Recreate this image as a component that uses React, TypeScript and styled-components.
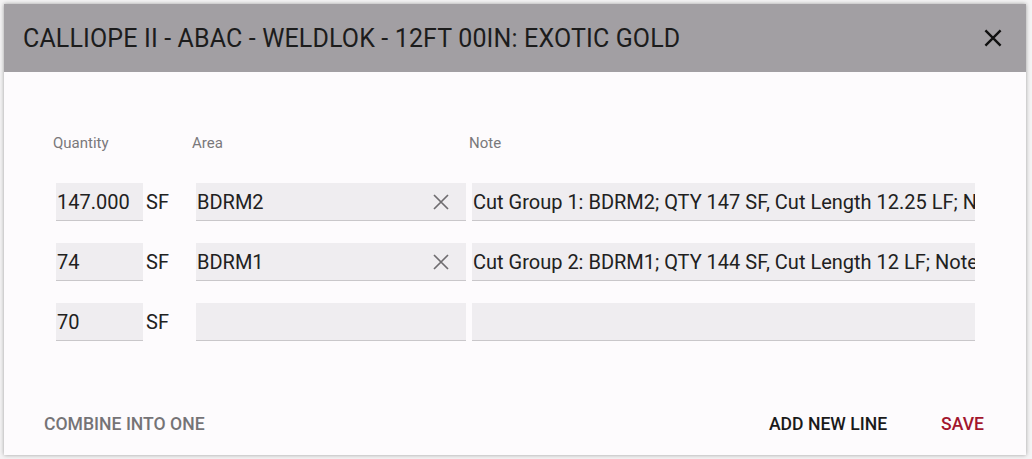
import React from "react";
import styled, { createGlobalStyle } from "styled-components";

const Global = createGlobalStyle`
  html, body { margin: 0; padding: 0; background: #f4f3f4; }
  body { font-family: Roboto, "Liberation Sans", Arial, sans-serif; }
  * { box-sizing: border-box; }
`;

const Page = styled.div`
  width: 1032px;
  height: 459px;
  padding: 4px 6px 4px 4px;
`;

const Dialog = styled.div`
  width: 1022px;
  height: 451px;
  background: #fdfbfd;
  box-shadow: 0 0 4px rgba(0, 0, 0, 0.35);
  display: flex;
  flex-direction: column;
`;

const Header = styled.div`
  height: 68px;
  background: #a29fa3;
  display: flex;
  align-items: center;
  justify-content: space-between;
  padding: 0 20px 0 19px;
`;

const Title = styled.h1`
  margin: 0;
  font-size: 25px;
  font-weight: 400;
  letter-spacing: 0.14px;
  color: #1c1c1c;
`;

const CloseButton = styled.button`
  border: 0;
  background: none;
  padding: 0;
  width: 26px;
  height: 26px;
  display: flex;
  align-items: center;
  justify-content: center;
  color: #111;
  cursor: pointer;
`;

const Body = styled.div`
  flex: 1;
  padding: 61px 0 0 52px;
  display: flex;
  flex-direction: column;
`;

const Row = styled.div<{ $gap?: number }>`
  display: flex;
  align-items: stretch;
  margin-bottom: ${(p) => p.$gap ?? 22}px;
`;

const LabelRow = styled.div`
  display: flex;
  height: 20px;
  margin-bottom: 30px;
  margin-left: -3px;
`;

const Label = styled.div<{ $w: number }>`
  width: ${(p) => p.$w}px;
  height: 20px;
  line-height: 20px;
  font-size: 15px;
  color: #7a787b;
`;

const Field = styled.div<{ $w: number; $mr?: number }>`
  width: ${(p) => p.$w}px;
  margin-right: ${(p) => p.$mr ?? 0}px;
  height: 38px;
  background: #efedf0;
  border-bottom: 1px solid #c9c7ca;
  display: flex;
  align-items: center;
  padding-left: 1px;
  font-size: 20px;
  color: #212121;
  white-space: nowrap;
  overflow: hidden;
`;

const FieldText = styled.span`
  flex: 1;
  overflow: hidden;
`;

const ClearIcon = styled.span`
  width: 50px;
  display: flex;
  align-items: center;
  justify-content: center;
  color: #6f6d70;
  flex-shrink: 0;
`;

const Unit = styled.div`
  width: 53px;
  padding-left: 3px;
  display: flex;
  align-items: center;
  font-size: 20px;
  color: #212121;
`;

const Footer = styled.div`
  height: 36px;
  margin-bottom: 13px;
  display: flex;
  align-items: center;
  padding: 0 42px 0 40px;
`;

const TextButton = styled.button<{ $color: string }>`
  border: 0;
  background: none;
  padding: 0;
  font-family: Roboto, "Liberation Sans", Arial, sans-serif;
  font-size: 17.6px;
  font-weight: 500;
  text-transform: uppercase;
  color: ${(p) => p.$color};
  cursor: pointer;
`;

const Spacer = styled.div`
  flex: 1;
`;

const ButtonGap = styled.div`
  width: 54px;
`;

const XIcon = ({ size, stroke }: { size: number; stroke: number }) => (
  <svg width={size} height={size} viewBox="0 0 24 24" fill="none">
    <path d="M5 5L19 19M19 5L5 19" stroke="currentColor" strokeWidth={stroke} strokeLinecap="butt" />
  </svg>
);

const rows = [
  { qty: "147.000", area: "BDRM2", note: "Cut Group 1: BDRM2; QTY 147 SF, Cut Length 12.25 LF; Note" },
  { qty: "74", area: "BDRM1", note: "Cut Group 2: BDRM1; QTY 144 SF, Cut Length 12 LF; Note" },
  { qty: "70", area: "", note: "" },
];

export default function App() {
  return (
    <>
      <Global />
      <Page>
        <Dialog>
          <Header>
            <Title>CALLIOPE II - ABAC - WELDLOK - 12FT 00IN: EXOTIC GOLD</Title>
            <CloseButton aria-label="close">
              <XIcon size={26} stroke={2.2} />
            </CloseButton>
          </Header>
          <Body>
            <LabelRow>
              <Label $w={139}>Quantity</Label>
              <Label $w={277}>Area</Label>
              <Label $w={300}>Note</Label>
            </LabelRow>
            {rows.map((r, i) => (
              <Row key={i} $gap={i === rows.length - 1 ? 0 : 22}>
                <Field $w={87}>
                  <FieldText>{r.qty}</FieldText>
                </Field>
                <Unit>SF</Unit>
                <Field $w={270} $mr={6}>
                  <FieldText>{r.area}</FieldText>
                  {r.area && (
                    <ClearIcon>
                      <XIcon size={24} stroke={1.7} />
                    </ClearIcon>
                  )}
                </Field>
                <Field $w={503}>
                  <FieldText>{r.note}</FieldText>
                </Field>
              </Row>
            ))}
          </Body>
          <Footer>
            <TextButton $color="#757376">Combine into one</TextButton>
            <Spacer />
            <TextButton $color="#1a1a1a">Add new line</TextButton>
            <ButtonGap />
            <TextButton $color="#a3162d">Save</TextButton>
          </Footer>
        </Dialog>
      </Page>
    </>
  );
}
